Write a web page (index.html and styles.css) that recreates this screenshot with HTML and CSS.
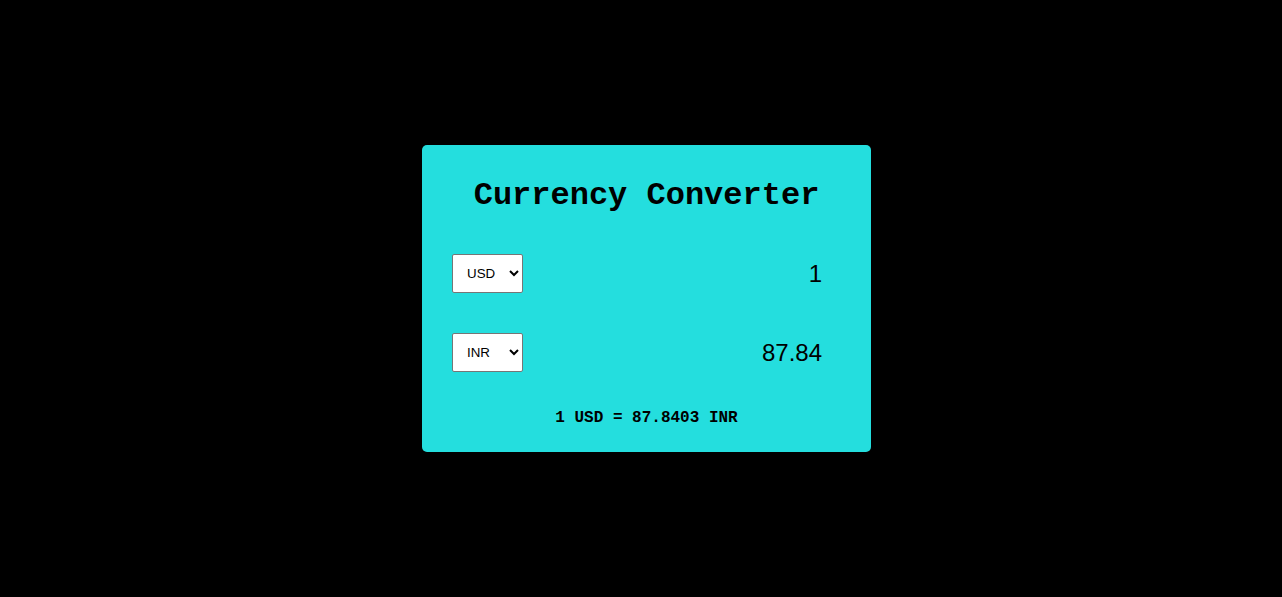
FILE: index.html
```html
<!DOCTYPE html>
<html>
<head>
<meta charset="utf-8">
<link rel="stylesheet" href="styles.css">
</head>
<body>
<div class="page">
  <div class="card">
    <h1 class="title">Currency Converter</h1>
    <div class="rows">
      <div class="row">
        <select class="cur">
          <option selected>USD</option>
          <option>INR</option>
        </select>
        <span class="amount">1</span>
      </div>
      <div class="row">
        <select class="cur">
          <option>USD</option>
          <option selected>INR</option>
        </select>
        <span class="amount">87.84</span>
      </div>
    </div>
    <p class="rate">1 USD = 87.8403 INR</p>
  </div>
</div>
</body>
</html>
```
FILE: styles.css
```css
html, body {
  margin: 0;
  padding: 0;
  background: #000;
  height: 100%;
}
.page {
  height: 597px;
  display: flex;
  align-items: center;
  justify-content: center;
  padding-left: 11px;
  box-sizing: border-box;
}
.card {
  width: 449px;
  height: 307px;
  box-sizing: border-box;
  background: #24dede;
  border-radius: 5px;
  padding: 32px 30px 24px 30px;
  display: flex;
  flex-direction: column;
}
.title {
  margin: 0 0 39px 0;
  font-family: "Liberation Mono", "Courier New", monospace;
  font-weight: bold;
  font-size: 32px;
  line-height: 38px;
  text-align: center;
  color: #000;
}
.rows {
  display: flex;
  flex-direction: column;
  gap: 40px;
}
.row {
  display: flex;
  align-items: center;
  justify-content: space-between;
  height: 39px;
}
.cur {
  width: 71px;
  height: 39px;
  box-sizing: border-box;
  font-family: "Liberation Sans", Arial, sans-serif;
  font-size: 13.333px;
  padding: 0 4px 0 10px;
  background: #fff;
  border: 1px solid #767676;
  border-radius: 2px;
  color: #000;
}
.amount {
  font-family: "Liberation Sans", Arial, sans-serif;
  font-size: 24px;
  color: #000;
  margin-right: 19px;
}
.rate {
  margin: 36px 0 0 0;
  font-family: "Liberation Mono", "Courier New", monospace;
  font-weight: bold;
  font-size: 16px;
  line-height: 20px;
  text-align: center;
  color: #000;
}
```
